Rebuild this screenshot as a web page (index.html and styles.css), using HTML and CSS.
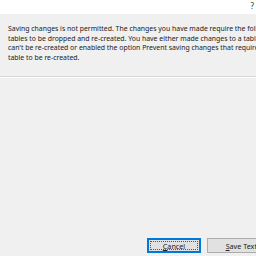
FILE: index.html
```html
<!DOCTYPE html>
<html lang="en">
<head>
  <meta charset="UTF-8" />
  <title>Save</title>
  <link rel="stylesheet" href="styles.css">
</head>
<body>
  <div class="titlebar">
    <span class="help">?</span>
  </div>
  <div class="message">
    <p>Saving changes is not permitted. The changes you have made require the following<br>
    tables to be dropped and re-created. You have either made changes to a table that<br>
    can't be re-created or enabled the option Prevent saving changes that require the<br>
    table to be re-created.</p>
  </div>
  <div class="list"></div>
  <div class="buttons">
    <button class="btn btn-focus"><span class="focus"><u>C</u>ancel</span></button>
    <button class="btn btn-wide"><u>S</u>ave Text File</button>
  </div>
</body>
</html>
```

FILE: styles.css
```css
* {margin: 0; padding: 0; box-sizing: border-box; font-family: 'Noto Sans', sans-serif;}
body {width: 256px; height: 256px; background-color: #f0f0f0; overflow: hidden; display: flex; flex-direction: column;}
.titlebar {height: 14px; background-color: #fff; display: flex; justify-content: flex-end; padding-right: 2px;}
.help {font-size: 8px; line-height: 11px; color: #333;}
.message {height: 63px; padding: 10px 0 0 8px; border-bottom: 1px solid #d9d9d9; overflow: hidden;}
.message p {font-size: 6.9px; line-height: 9.5px; color: #222; white-space: nowrap;}
.list {flex: 1; border-top: 1px solid #fff;}
.buttons {display: flex; gap: 6px; padding: 0 0 3px 147px; overflow: hidden; white-space: nowrap;}
.btn {height: 15px; width: 54px; flex-shrink: 0; background-color: #e1e1e1; border: 1px solid #adadad; font-size: 7.2px; color: #222; display: flex; align-items: center; justify-content: center;}
.btn-wide {width: 82px;}
.btn-focus {border: 1px solid #0078d7; box-shadow: inset 0 0 0 1px #0078d7; padding: 2px;}
.focus {border: 1px dotted #555; width: 100%; height: 100%; display: flex; align-items: center; justify-content: center;}
```
